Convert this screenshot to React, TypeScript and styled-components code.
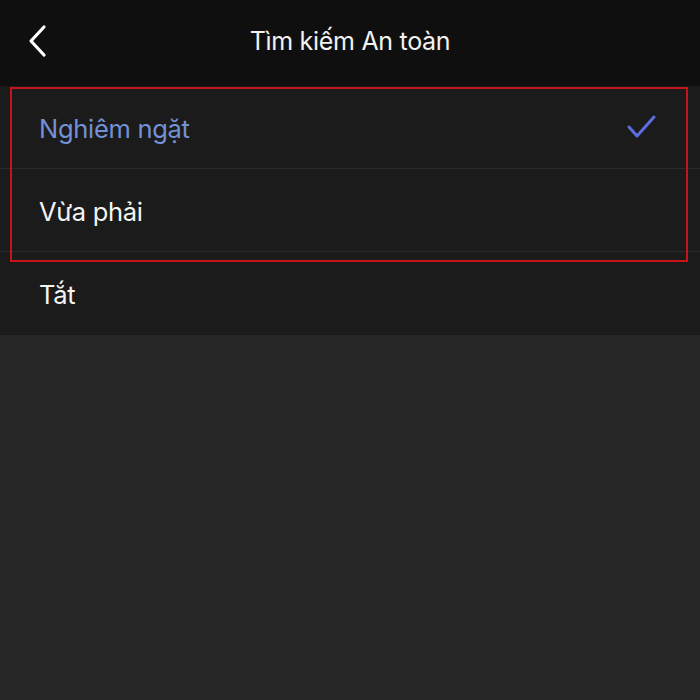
import React from "react";
import styled, { createGlobalStyle } from "styled-components";

const Global = createGlobalStyle`
  html, body { margin: 0; padding: 0; background: #262626; }
  body { font-family: Inter, "Noto Sans", sans-serif; }
`;

const Page = styled.div`
  width: 700px;
  height: 700px;
  background: #262626;
  display: flex;
  flex-direction: column;
  overflow: hidden;
`;

const Header = styled.header`
  height: 86px;
  background: #0f0f0f;
  display: grid;
  grid-template-columns: 80px 1fr 80px;
  align-items: center;
`;

const BackButton = styled.button`
  background: none;
  border: none;
  padding: 0 0 4px 28px;
  display: flex;
  align-items: center;
  color: #fff;
`;

const Title = styled.h1`
  margin: 0 0 4px;
  text-align: center;
  color: #f2f2f2;
  font-weight: 400;
  font-size: 25px;
  letter-spacing: -0.3px;
`;

const List = styled.div`
  position: relative;
  background: #1b1b1b;
  display: flex;
  flex-direction: column;
`;

const Row = styled.div<{ $last?: boolean }>`
  height: 83px;
  box-sizing: border-box;
  display: flex;
  align-items: center;
  justify-content: space-between;
  padding: 0 42px 0 39px;
  border-bottom: ${(p) => (p.$last ? "none" : "1px solid #2b2b2b")};
`;

const Label = styled.span<{ $active?: boolean }>`
  color: ${(p) => (p.$active ? "#7391d6" : "#f4f4f4")};
  font-size: 25.5px;
  letter-spacing: -0.3px;
  padding-top: 2px;
`;

const Highlight = styled.div`
  position: absolute;
  left: 10px;
  top: 1px;
  width: 674px;
  height: 171px;
  border: 2px solid #c7141b;
  pointer-events: none;
`;

const Check = () => (
  <svg width="32" height="28" viewBox="0 0 32 28" fill="none">
    <path d="M3 14 L11 23 L28 4" stroke="#5b6fe0" strokeWidth="3" strokeLinecap="round" strokeLinejoin="round" />
  </svg>
);

const Chevron = () => (
  <svg width="20" height="34" viewBox="0 0 20 34" fill="none">
    <path d="M16 3 L3 17 L16 31" stroke="#fff" strokeWidth="3.2" strokeLinecap="round" strokeLinejoin="round" />
  </svg>
);

export default function App() {
  return (
    <Page>
      <Global />
      <Header>
        <BackButton aria-label="Back">
          <Chevron />
        </BackButton>
        <Title>Tìm kiếm An toàn</Title>
        <div />
      </Header>
      <List>
        <Row>
          <Label $active>Nghiêm ngặt</Label>
          <Check />
        </Row>
        <Row>
          <Label>Vừa phải</Label>
        </Row>
        <Row $last>
          <Label>Tắt</Label>
        </Row>
        <Highlight />
      </List>
    </Page>
  );
}
